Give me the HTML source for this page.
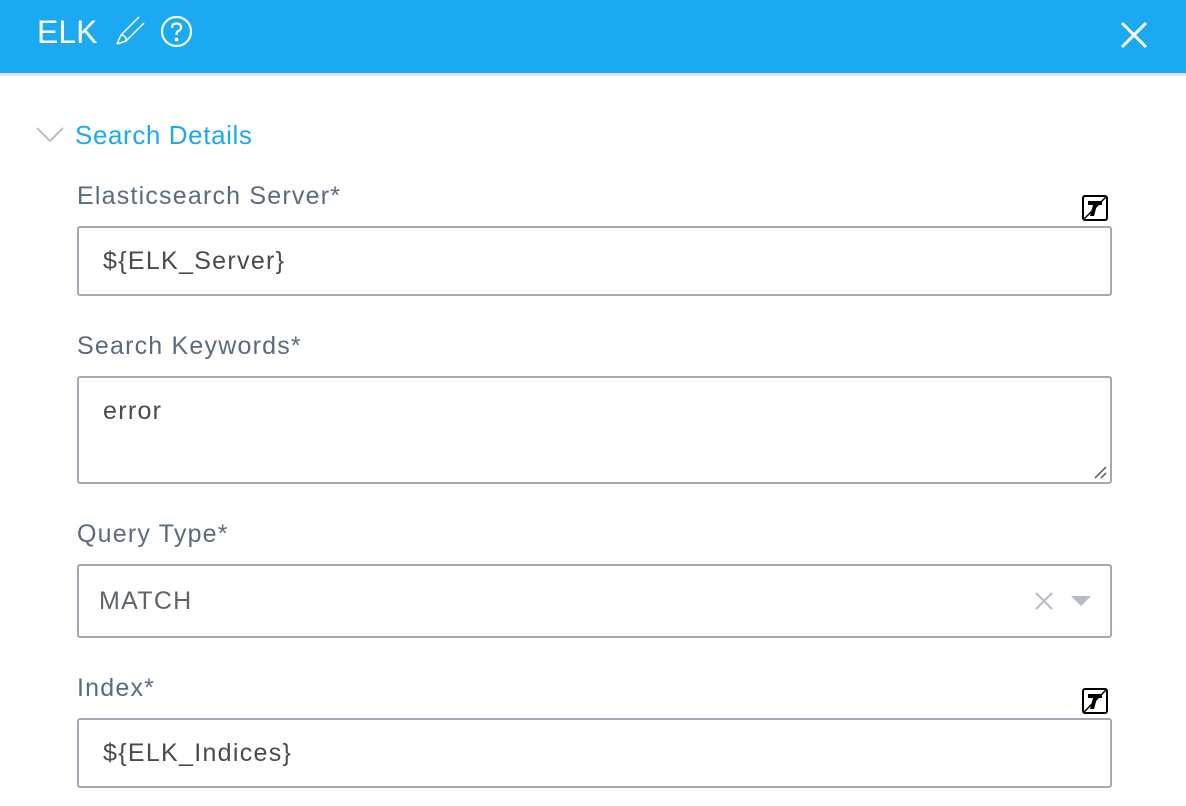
<!DOCTYPE html>
<html><head><style>
body{margin:0;width:1186px;height:806px;overflow:hidden;background:#fff;font-family:"Liberation Sans",sans-serif;position:relative}
.hdr{position:absolute;left:0;top:0;width:1186px;height:73px;background:#1ba9f2;border-bottom:3px solid #e2e4e6}
.t{position:absolute;left:37px;top:14px;color:#fff;font-size:32px}
.lbl{position:absolute;left:77px;color:#5b6b7e;font-size:25px;letter-spacing:1.2px}
.inp{position:absolute;left:77px;width:1031px;border:2px solid #a1a9b5;border-radius:3px;box-sizing:content-box}
.v{position:absolute;left:24px;color:#4a4a4a;font-size:25px;letter-spacing:1.3px}
.ic{position:absolute;left:1082px;width:26px;height:26px;border:2px solid #000;border-radius:3px;box-sizing:border-box}
</style></head><body>
<div class="hdr">
<div class="t">ELK</div>
<svg style="position:absolute;left:114px;top:14px" width="34" height="34" viewBox="0 0 34 34" fill="none" stroke="#fff" stroke-width="1.5"><path d="M3 30 L7 21 L25 3 M3 30 L12 27 L30 9 M7 21 Q10 21 12 24 Q12 26 12 27"/></svg>
<svg style="position:absolute;left:160px;top:15px" width="33" height="33" viewBox="0 0 33 33" fill="none" stroke="#fff" stroke-width="2.2"><circle cx="16.5" cy="16.5" r="14.5"/><path d="M12 13 Q12 8.5 16.5 8.5 Q21 8.5 21 12.5 Q21 15 17.5 16.5 Q16.5 17.5 16.5 20"/><circle cx="16.5" cy="24.5" r="0.8" fill="#fff"/></svg>
<svg style="position:absolute;left:1119px;top:20px" width="30" height="30" viewBox="0 0 30 30" stroke="#fff" stroke-width="3"><path d="M3 3L27 27M27 3L3 27"/></svg>
</div>
<svg style="position:absolute;left:36px;top:126px" width="30" height="18" viewBox="0 0 30 18" fill="none" stroke="#b9bfc7" stroke-width="2"><path d="M1 2L14 15L27 2"/></svg>
<div style="position:absolute;left:75px;top:120px;color:#1ba9f2;font-size:26px;letter-spacing:0.6px">Search Details</div>

<div class="lbl" style="top:182px">Elasticsearch Server*</div>
<div class="ic" style="top:195px"><svg width="22" height="22" viewBox="0 0 22 22"><path d="M4 4H18V8H13L10 19H6L9 8H4Z" fill="#000"/><path d="M0 22L22 0" stroke="#000" stroke-width="1.5"/></svg></div>
<div class="inp" style="top:226px;height:66px"><div class="v" style="top:19px">${ELK_Server}</div></div>

<div class="lbl" style="top:332px">Search Keywords*</div>
<div class="inp" style="top:376px;height:104px"><div class="v" style="top:19px">error</div>
<svg style="position:absolute;right:3px;bottom:3px" width="14" height="14" stroke="#555" stroke-width="1.5"><path d="M2 13L13 2M8 13L13 8"/></svg></div>

<div class="lbl" style="top:520px">Query Type*</div>
<div class="inp" style="top:564px;height:70px"><div class="v" style="top:21px;left:20px;color:#5f6469">MATCH</div>
<svg style="position:absolute;left:955px;top:25px" width="20" height="20" stroke="#b7bcc4" stroke-width="2"><path d="M2 2L18 18M18 2L2 18"/></svg>
<svg style="position:absolute;left:992px;top:30px" width="20" height="12"><path d="M0 0H20L10 10Z" fill="#b7bcc4"/></svg></div>

<div class="lbl" style="top:674px">Index*</div>
<div class="ic" style="top:688px"><svg width="22" height="22" viewBox="0 0 22 22"><path d="M4 4H18V8H13L10 19H6L9 8H4Z" fill="#000"/><path d="M0 22L22 0" stroke="#000" stroke-width="1.5"/></svg></div>
<div class="inp" style="top:718px;height:66px"><div class="v" style="top:19px">${ELK_Indices}</div></div>
</body></html>
